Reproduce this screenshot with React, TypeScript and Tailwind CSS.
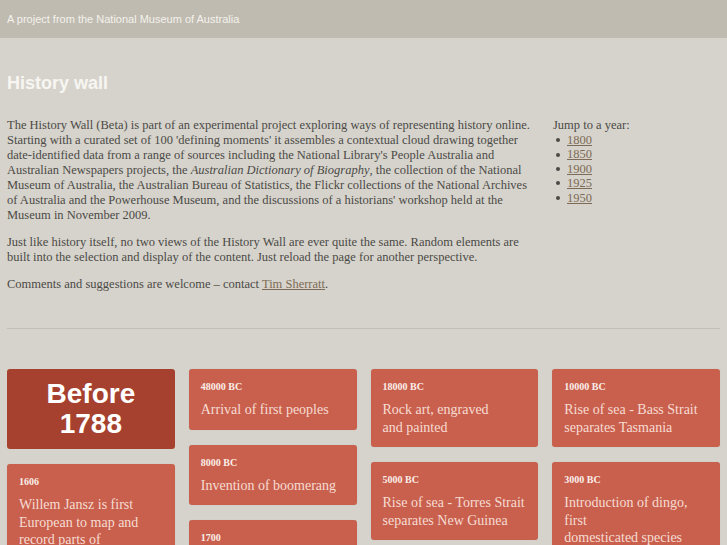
const serif = { fontFamily: '"Liberation Serif", "Times New Roman", serif' };
const sans = { fontFamily: '"Liberation Sans", Arial, sans-serif' };

type Card = { year: string; lines: string[] };

const columns: (Card | 'before')[][] = [
  [
    'before',
    { year: '1606', lines: ['Willem Jansz is first', 'European to map and', 'record parts of', 'Australian coastline'] },
  ],
  [
    { year: '48000 BC', lines: ['Arrival of first peoples'] },
    { year: '8000 BC', lines: ['Invention of boomerang'] },
    { year: '1700', lines: ['Macassan trepangers', 'visit northern coast'] },
  ],
  [
    { year: '18000 BC', lines: ['Rock art, engraved', 'and painted'] },
    { year: '5000 BC', lines: ['Rise of sea - Torres Strait', 'separates New Guinea'] },
  ],
  [
    { year: '10000 BC', lines: ['Rise of sea - Bass Strait', 'separates Tasmania'] },
    { year: '3000 BC', lines: ['Introduction of dingo,', 'first', 'domesticated species'] },
  ],
];

const years = ['1800', '1850', '1900', '1925', '1950'];

function EventCard({ card }: { card: Card }) {
  return (
    <div className="rounded-[3px] bg-[#c9604d] px-[12px] pt-[12px] pb-[11px] shadow-[0_0_1px_rgba(0,0,0,0.15)]" style={serif}>
      <div className="text-[10px] font-bold leading-[12px] text-[#fbeee9]">{card.year}</div>
      <div className="mt-[8px] text-[14px] leading-[17.5px] whitespace-nowrap text-[#f6dcd3]">
        {card.lines.map((l, i) => (
          <div key={i}>{l}</div>
        ))}
      </div>
    </div>
  );
}

export default function App() {
  return (
    <div className="h-[545px] overflow-hidden bg-[#d6d3cc]">
      <div className="flex h-[38px] items-center bg-[#bfbbb1] px-[7px]">
        <span className="text-[11px] text-[#f4f2ec]" style={sans}>
          A project from the National Museum of Australia
        </span>
      </div>

      <div className="px-[7px]">
        <h1 className="mt-[33px] text-[18px] font-bold leading-[24px] text-[#f7f6f2]" style={sans}>
          History wall
        </h1>

        <div className="mt-[23px] flex text-[12.5px] leading-[15px] text-[#4b4a46]" style={serif}>
          <div className="w-[528px] shrink-0">
            <p>
              The History Wall (Beta) is part of an experimental project exploring ways of representing history online.
              Starting with a curated set of 100 'defining moments' it assembles a contextual cloud drawing together
              date-identified data from a range of sources including the National Library's People Australia and
              Australian Newspapers projects, the <em>Australian Dictionary of Biography</em>, the collection of the National
              Museum of Australia, the Australian Bureau of Statistics, the Flickr collections of the National Archives
              of Australia and the Powerhouse Museum, and the discussions of a historians' workshop held at the Museum in
              November 2009.
            </p>
            <p className="mt-[12px]">
              Just like history itself, no two views of the History Wall are ever quite the same. Random elements are
              built into the selection and display of the content. Just reload the page for another perspective.
            </p>
            <p className="mt-[12px]">
              Comments and suggestions are welcome – contact{' '}
              <a href="#" className="text-[#7d6b55] underline">
                Tim Sherratt
              </a>
              .
            </p>
          </div>
          <div className="ml-[18px]">
            <div>Jump to a year:</div>
            <ul className="leading-[14.4px]">
              {years.map((y) => (
                <li key={y} className="flex items-center">
                  <span className="ml-[3px] mr-[7px] h-[4px] w-[4px] rounded-full bg-[#4b4a46]" />
                  <a href="#" className="text-[#7d6b55] underline">
                    {y}
                  </a>
                </li>
              ))}
            </ul>
          </div>
        </div>

        <div className="mt-[36px] h-px bg-[#c3bfb7]" />

        <div className="mt-[40px] flex gap-[14px]">
          {columns.map((col, ci) => (
            <div key={ci} className="flex flex-1 flex-col gap-[15px]">
              {col.map((c, i) =>
                c === 'before' ? (
                  <div
                    key={i}
                    className="flex h-[80px] flex-col items-center justify-center rounded-[3px] bg-[#a5412e] text-center text-[28px] font-bold leading-[30px] text-white"
                    style={sans}
                  >
                    <div>Before</div>
                    <div>1788</div>
                  </div>
                ) : (
                  <EventCard key={i} card={c} />
                ),
              )}
            </div>
          ))}
        </div>
      </div>
    </div>
  );
}
